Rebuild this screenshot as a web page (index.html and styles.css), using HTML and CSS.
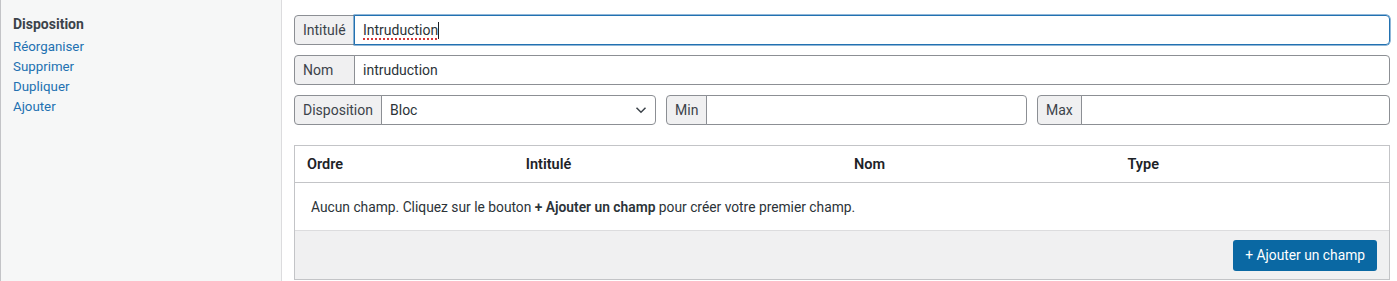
FILE: index.html
```html
<!DOCTYPE html>
<html lang="fr">
<head>
  <meta charset="UTF-8">
  <meta name="viewport" content="width=device-width, initial-scale=1.0">
  <title>Disposition</title>
  <link rel="stylesheet" href="styles.css">
</head>
<body>
  <div id="layout">
    <!-- colonne de gauche -->
    <aside class="sidebar">
      <div class="sidebar-title">Disposition</div>
      <a href="#" class="sidebar-link">Réorganiser</a>
      <a href="#" class="sidebar-link">Supprimer</a>
      <a href="#" class="sidebar-link">Dupliquer</a>
      <a href="#" class="sidebar-link">Ajouter</a>
    </aside>

    <!-- réglages de la disposition -->
    <main class="content">
      <div class="field-group">
        <span class="field-label wide">Intitulé</span>
        <span class="field-value focused"><span class="typo">Intruduction</span><span class="caret"></span></span>
      </div>

      <div class="field-group">
        <span class="field-label wide">Nom</span>
        <span class="field-value">intruduction</span>
      </div>

      <div class="field-row">
        <div class="field-group">
          <span class="field-label">Disposition</span>
          <span class="field-value select">
            Bloc
            <svg class="chevron" width="12" height="8" viewBox="0 0 12 8"><path d="M1.5 1.8 6 6.2l4.5-4.4" fill="none" stroke="#3c434a" stroke-width="1.5"/></svg>
          </span>
        </div>
        <div class="field-group">
          <span class="field-label">Min</span>
          <span class="field-value"></span>
        </div>
        <div class="field-group">
          <span class="field-label">Max</span>
          <span class="field-value"></span>
        </div>
      </div>

      <div class="fields-table">
        <div class="table-head">
          <div class="col">Ordre</div>
          <div class="col">Intitulé</div>
          <div class="col">Nom</div>
          <div class="col">Type</div>
        </div>
        <p class="table-empty">Aucun champ. Cliquez sur le bouton <strong>+ Ajouter un champ</strong> pour créer votre premier champ.</p>
        <div class="table-foot">
          <button class="add-btn">+ Ajouter un champ</button>
        </div>
      </div>
    </main>
  </div>
</body>
</html>
```

FILE: styles.css
```css
* {
  margin: 0;
  padding: 0;
  box-sizing: border-box;
}

body {
  font-family: Roboto, "Liberation Sans", sans-serif;
  font-size: 13px;
  color: #1d2327;
  background: #fff;
}

#layout {
  display: flex;
  height: 281px;
}

.sidebar {
  width: 282px;
  flex-shrink: 0;
  background: #f6f7f7;
  border-left: 1px solid #c3c4c7;
  border-right: 1px solid #dcdcde;
  padding: 15px 12px;
  display: flex;
  flex-direction: column;
}

.sidebar-title {
  font-weight: 700;
  font-size: 14px;
  color: #3c434a;
  line-height: 18px;
  margin-bottom: 4px;
}

.sidebar-link {
  color: #2271b1;
  text-decoration: none;
  line-height: 20px;
  font-size: 13.3px;
}

.content {
  flex: 1;
  padding: 15px 7px 0 12px;
  display: flex;
  flex-direction: column;
  gap: 10px;
}

.field-row {
  display: grid;
  grid-template-columns: 362fr 361fr 353fr;
  gap: 10px;
}

.field-group {
  display: flex;
  height: 30px;
}

.field-label {
  display: flex;
  align-items: center;
  padding: 0 8px;
  background: #f0f0f1;
  border: 1px solid #8c8f94;
  border-radius: 4px 0 0 4px;
  color: #3c434a;
  font-size: 14px;
}

.field-label.wide {
  min-width: 61px;
}

.field-value {
  flex: 1;
  display: flex;
  align-items: center;
  padding: 0 8px;
  margin-left: -1px;
  border: 1px solid #8c8f94;
  border-radius: 0 4px 4px 0;
  font-size: 14px;
  color: #2c3338;
}

.field-value.focused {
  border-color: #2271b1;
  box-shadow: 0 0 0 0.5px #2271b1;
  position: relative;
}

.typo {
  text-decoration: underline dotted #d63638;
  text-decoration-thickness: 2px;
  text-underline-offset: 3px;
}

.caret {
  display: inline-block;
  width: 1px;
  height: 17px;
  background: #1d2327;
}

.select {
  justify-content: space-between;
}

.fields-table {
  margin-top: 10px;
  border: 1px solid #c3c4c7;
}

.table-head {
  display: grid;
  grid-template-columns: 20% 30% 25% 25%;
  height: 37px;
  align-items: center;
  border-bottom: 1px solid #c3c4c7;
  font-weight: 600;
  font-size: 14.5px;
}

.col {
  padding-left: 12px;
}

.table-empty {
  height: 48px;
  line-height: 48px;
  padding-left: 16px;
  border-bottom: 1px solid #dcdcde;
  color: #2c3338;
  font-size: 13.8px;
}

.table-empty strong {
  font-weight: 600;
}

.table-foot {
  height: 48px;
  background: #f0f0f1;
  display: flex;
  justify-content: flex-end;
  align-items: center;
  padding: 0 12px;
}

.add-btn {
  background: #0a68a3;
  color: #fff;
  border: none;
  border-radius: 3px;
  height: 31px;
  padding: 0 12px;
  font-family: inherit;
  font-size: 13.8px;
}
```
